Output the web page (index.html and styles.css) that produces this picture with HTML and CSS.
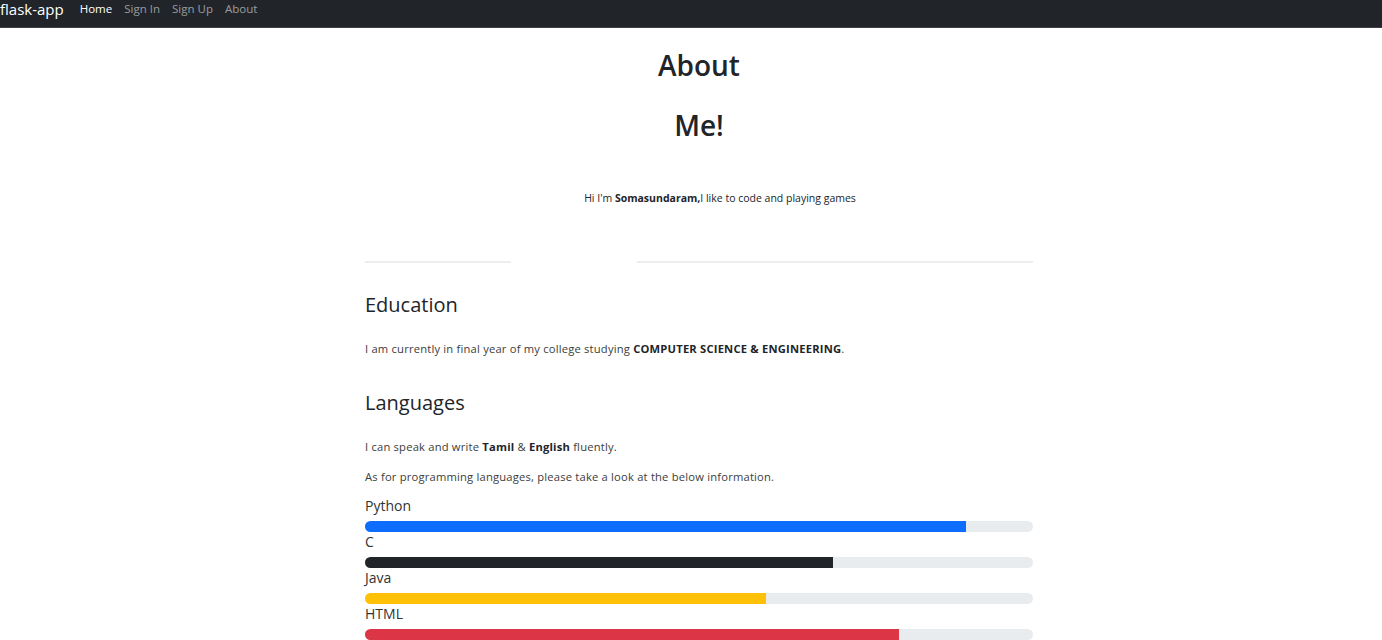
FILE: index.html
```html
<!DOCTYPE html>
<html lang="en">
<head>
<meta charset="utf-8">
<title>About</title>
<link rel="stylesheet" href="styles.css">
</head>
<body>
<nav class="navbar">
  <a class="brand" href="#">flask-app</a>
  <ul class="nav-links">
    <li><a class="active" href="#">Home</a></li>
    <li><a href="#">Sign In</a></li>
    <li><a href="#">Sign Up</a></li>
    <li><a href="#">About</a></li>
  </ul>
</nav>
<main class="page">
  <header class="hero">
    <h1 class="title">About</h1>
    <h1 class="title title-second">Me!</h1>
    <p class="intro">Hi I'm <b>Somasundaram,</b>I like to code and playing games</p>
  </header>
  <div class="divider"><span class="seg seg-left"></span><span class="seg seg-right"></span></div>
  <section class="section">
    <h2 class="heading">Education</h2>
    <p class="text">I am currently in final year of my college studying <b>COMPUTER SCIENCE &amp; ENGINEERING</b>.</p>
  </section>
  <section class="section">
    <h2 class="heading">Languages</h2>
    <p class="text">I can speak and write <b>Tamil</b> &amp; <b>English</b> fluently.</p>
    <p class="text">As for programming languages, please take a look at the below information.</p>
    <div class="skills">
      <div class="skill">
        <div class="skill-name">Python</div>
        <div class="track"><div class="fill fill-blue" style="width:90%"></div></div>
      </div>
      <div class="skill">
        <div class="skill-name">C</div>
        <div class="track"><div class="fill fill-dark" style="width:70%"></div></div>
      </div>
      <div class="skill">
        <div class="skill-name">Java</div>
        <div class="track"><div class="fill fill-yellow" style="width:60%"></div></div>
      </div>
      <div class="skill">
        <div class="skill-name">HTML</div>
        <div class="track"><div class="fill fill-red" style="width:80%"></div></div>
      </div>
    </div>
  </section>
</main>
</body>
</html>
```
FILE: styles.css
```css
* { box-sizing: border-box; }
html, body { margin: 0; padding: 0; }
body {
  font-family: "Open Sans", "Noto Sans", "DejaVu Sans", sans-serif;
  color: #212529;
  background: #fff;
}
.navbar {
  display: flex;
  align-items: flex-start;
  height: 28px;
  background: #212529;
  border-bottom: 1px solid #3c3f43;
  padding: 0;
}
.brand {
  color: #fff;
  text-decoration: none;
  font-size: 15px;
  line-height: 18px;
  font-weight: 500;
  margin-right: 16px;
}
.nav-links {
  display: flex;
  gap: 12px;
  list-style: none;
  margin: 0;
  padding: 1px 0 0 0;
}
.nav-links li {
  font-size: 11.5px;
  line-height: 15px;
}
.nav-links a {
  color: rgba(255,255,255,0.55);
  text-decoration: none;
}
.nav-links a.active { color: #fff; }
.page {
  width: 668px;
  margin-left: 365px;
}
.hero { text-align: center; }
.title {
  margin: 0;
  font-size: 28px;
  font-weight: 600;
  line-height: 1.2;
  padding-top: 21px;
}
.title-second { padding-top: 26px; }
.intro {
  font-size: 10.5px;
  margin: 49px 0 0 0;
  padding-left: 42px;
}
.intro b { font-weight: 700; }
.divider {
  display: flex;
  justify-content: space-between;
  margin-top: 56px;
}
.seg { height: 2px; background: #eeeeee; }
.seg-left { width: 146px; }
.seg-right { width: 396px; }
.heading {
  font-size: 20px;
  font-weight: 500;
  margin: 30px 0 0 0;
  line-height: 1.2;
}
.section + .section .heading { margin-top: 34px; }
.text {
  font-size: 11.2px;
  letter-spacing: 0.2px;
  color: #3a3d40;
  margin: 0;
  margin-top: 24px;
  line-height: 1.4;
}
.text + .text { margin-top: 14px; }
.text b { color: #212529; font-weight: 700; }
.skills { margin-top: 12px; }
.skill-name {
  font-size: 14px;
  line-height: 20px;
  padding-bottom: 5px;
  color: #333;
}
.track {
  height: 11px;
  background: #e9ecef;
  border-radius: 6px;
  overflow: hidden;
}
.fill { height: 100%; }
.fill-blue { background: #0d6efd; }
.fill-dark { background: #212529; }
.fill-yellow { background: #ffc107; }
.fill-red { background: #dc3545; }
```
